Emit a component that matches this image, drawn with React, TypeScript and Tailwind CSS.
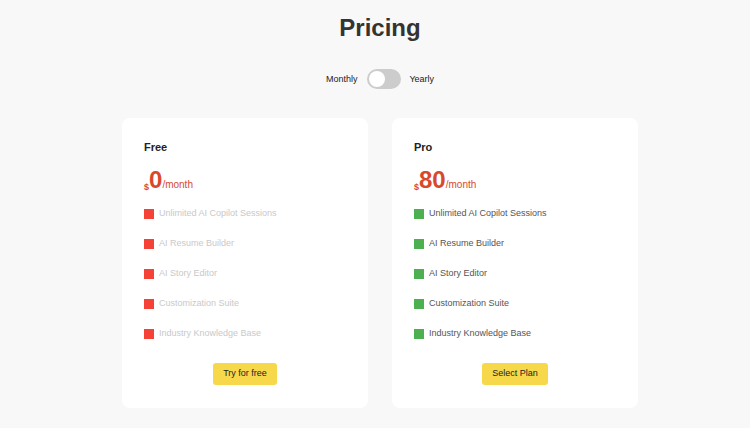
import type { ReactNode } from 'react'

// ── data ─────────────────────────────────────────────────────────────────────

const FEATURES = [
  'Unlimited AI Copilot Sessions',
  'AI Resume Builder',
  'AI Story Editor',
  'Customization Suite',
  'Industry Knowledge Base',
]

interface Plan {
  name: string
  price: string
  cta: string
  included: boolean
}

const PLANS: Plan[] = [
  { name: 'Free', price: '0', cta: 'Try for free', included: false },
  { name: 'Pro', price: '80', cta: 'Select Plan', included: true },
]

// ── pieces ───────────────────────────────────────────────────────────────────

function Toggle() {
  return (
    <div className="flex items-center h-[20px] w-[34px] rounded-full bg-[#cccccc] px-[2px]">
      <div className="h-[16px] w-[16px] rounded-full bg-white" />
    </div>
  )
}

function FeatureRow({ label, included }: { label: string; included: boolean }) {
  return (
    <li className="flex items-center h-[20px] gap-[5px]">
      <span
        className={
          included
            ? 'block h-[10px] w-[10px] bg-[#4caf50]'
            : 'block h-[10px] w-[10px] bg-[#f44336]'
        }
      />
      <span className={included ? 'text-[9px] text-[#555555]' : 'text-[9px] text-[#c9c9c9]'}>
        {label}
      </span>
    </li>
  )
}

function Card({ plan }: { plan: Plan }): ReactNode {
  return (
    <div className="flex flex-col w-[246px] h-[290px] rounded-[8px] bg-white px-[22px] pt-[22px]">
      <h2 className="text-[11px] leading-[14px] font-bold text-[#222222]">{plan.name}</h2>

      {/* price */}
      <div className="mt-[12px] flex items-baseline h-[28px] text-[#d8492b]">
        <span className="text-[9px] font-bold translate-y-[2px]">$</span>
        <span className="text-[24px] leading-[28px] font-bold">{plan.price}</span>
        <span className="text-[10px]">/month</span>
      </div>

      <ul className="mt-[10px] flex flex-col gap-[10px]">
        {FEATURES.map((f) => (
          <FeatureRow key={f} label={f} included={plan.included} />
        ))}
      </ul>

      <div className="mt-[19px] flex justify-center">
        <button className="h-[22px] px-[10px] rounded-[3px] bg-[#f7d84a] text-[9px] text-[#222222]">
          {plan.cta}
        </button>
      </div>
    </div>
  )
}

// ── page ─────────────────────────────────────────────────────────────────────

export default function App() {
  return (
    <div
      className="w-[750px] h-[428px] bg-[#f8f8f8] pt-[14px] overflow-hidden"
      style={{ fontFamily: '"Liberation Sans", Arial, sans-serif' }}
    >
      <h1 className="text-center pl-[10px] text-[24px] leading-[28px] font-bold text-[#333333]">
        Pricing
      </h1>

      {/* billing toggle */}
      <div className="mt-[27px] flex items-center justify-center pl-[10px] h-[20px]">
        <span className="text-[9px] text-[#222222] mr-[10px] translate-y-[1px]">Monthly</span>
        <Toggle />
        <span className="text-[9px] text-[#222222] ml-[8px] translate-y-[1px]">Yearly</span>
      </div>

      <div className="mt-[29px] flex justify-center gap-[24px] pl-[10px]">
        {PLANS.map((p) => (
          <Card key={p.name} plan={p} />
        ))}
      </div>
    </div>
  )
}
